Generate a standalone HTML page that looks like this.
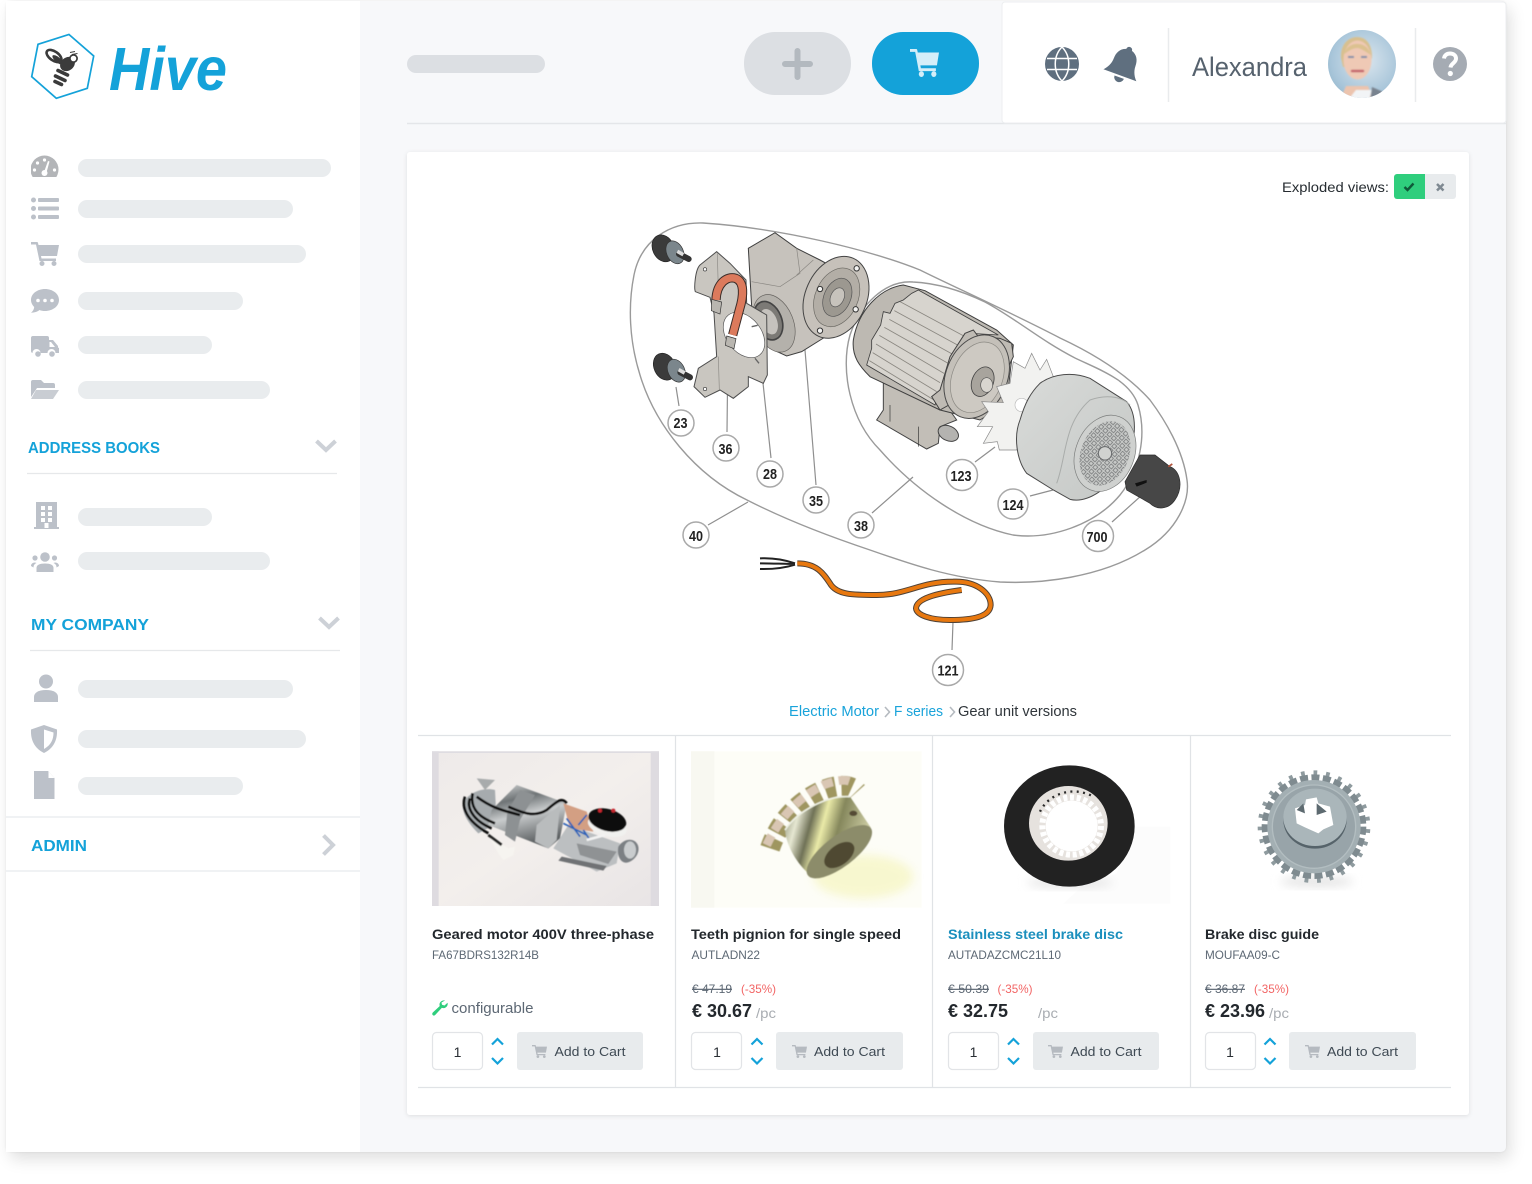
<!DOCTYPE html>
<html lang="en"><head><meta charset="utf-8"><title>Hive</title>
<style>
html,body{margin:0;padding:0;background:#fff;width:1532px;height:1184px;overflow:hidden}
#card{position:absolute;left:6px;top:1px;width:1500px;height:1151px;border-radius:5px;background:#f7f8fa;box-shadow:4px 7px 16px rgba(0,0,0,.13),0 0 2px rgba(0,0,0,.08)}
svg{position:absolute;left:0;top:0}
text{font-family:"Liberation Sans",sans-serif}
</style></head><body>
<div id="card"></div>
<svg width="1532" height="1184" viewBox="0 0 1532 1184" xmlns="http://www.w3.org/2000/svg">
<defs>
<filter id="b1" x="-10%" y="-10%" width="120%" height="120%"><feGaussianBlur stdDeviation="1.6"/></filter>
<filter id="b05" x="-10%" y="-10%" width="120%" height="120%"><feGaussianBlur stdDeviation=".7"/></filter>
<filter id="b2" x="-30%" y="-30%" width="160%" height="160%"><feGaussianBlur stdDeviation="14"/></filter>
<filter id="sh" x="-5%" y="-5%" width="110%" height="110%"><feDropShadow dx="0" dy="1" stdDeviation="2" flood-color="#000" flood-opacity=".1"/></filter>
<linearGradient id="cyl" x1="0" y1="0" x2="0.3" y2="1"><stop offset="0" stop-color="#d8dadb"/><stop offset=".3" stop-color="#6f7476"/><stop offset=".55" stop-color="#c9cccd"/><stop offset="1" stop-color="#5c6062"/></linearGradient>
<linearGradient id="hub" x1="0" y1="0" x2="1" y2="0.25"><stop offset="0" stop-color="#7f8468"/><stop offset=".2" stop-color="#e6e7d2"/><stop offset=".36" stop-color="#6f7156"/><stop offset=".5" stop-color="#eaeaa8"/><stop offset=".68" stop-color="#85875c"/><stop offset="1" stop-color="#c9c9a0"/></linearGradient>
<linearGradient id="img1bg" x1="0" y1="0" x2="1" y2="1"><stop offset="0" stop-color="#eeeae9"/><stop offset=".5" stop-color="#f3efec"/><stop offset="1" stop-color="#e8e4e5"/></linearGradient>
<linearGradient id="cover" x1="0" y1="0" x2="1" y2="1"><stop offset="0" stop-color="#d9dbd9"/><stop offset="1" stop-color="#c4c7c5"/></linearGradient>
<radialGradient id="av" cx=".55" cy=".45" r=".7"><stop offset="0" stop-color="#dbe6ee"/><stop offset=".7" stop-color="#a9c6da"/><stop offset="1" stop-color="#8fb4c9"/></radialGradient>
<pattern id="grille" width="17" height="17" patternUnits="userSpaceOnUse" patternTransform="rotate(20)"><rect width="17" height="17" fill="#c8cac8"/><rect x="1" y="1" width="11" height="11" fill="none" stroke="#77797a" stroke-width="2.4"/></pattern>
<clipPath id="avc"><circle cx="1362" cy="64" r="34"/></clipPath>
<clipPath id="gauge"><rect x="31" y="155" width="28" height="22"/></clipPath>
<symbol id="cart" viewBox="0 0 28 24" preserveAspectRatio="none"><path d="M0 0H6a1 1 0 0 1 1 1L7.500 3H28L26 14H10L10.500 16.500H25V19H8.500L5 2.500H0Z"/><circle cx="11" cy="21.500" r="2.500"/><circle cx="23" cy="21.500" r="2.500"/></symbol>
<g id="mount"><ellipse cx="130" cy="115" rx="32" ry="42" transform="rotate(-25 130 115)" fill="#3b3b3b" stroke="#222" stroke-width="2"/><ellipse cx="165" cy="127" rx="25" ry="36" transform="rotate(-25 165 127)" fill="#7b868c" stroke="#333" stroke-width="2"/><path d="M177 132L206 147" stroke="#333" stroke-width="18" stroke-linecap="round"/><path d="M172 124L190 134" stroke="#ddd" stroke-width="11"/></g>
</defs>

<!-- sidebar -->
<rect x="6" y="1" width="354" height="1151" fill="#fff"/>
<path d="M6 817H360M6 871H360" stroke="#eceef0" stroke-width="1.500"/>
<!-- logo -->
<path d="M69 34.500L93.700 56 87.300 88.300 56.300 98.300 31.700 76.700 38 44.300Z" fill="#fff" stroke="#14a2d9" stroke-width="1.700"/>
<g>
<ellipse cx="54" cy="56" rx="8.500" ry="4.500" transform="rotate(35 54 56)" fill="#fff" stroke="#3b3b3b" stroke-width="2.600"/>
<ellipse cx="58" cy="60" rx="7" ry="2.600" transform="rotate(40 58 60)" fill="#3b3b3b"/>
<ellipse cx="67.500" cy="64" rx="8" ry="6.500" transform="rotate(-40 67.500 64)" fill="#3b3b3b"/>
<circle cx="73.500" cy="58.500" r="3.600" fill="#fff" stroke="#3b3b3b" stroke-width="1.700"/>
<path d="M70 52.500l5-1M72 54.500l5.500-1" stroke="#3b3b3b" fill="none" stroke-width="1"/>
<path d="M58 70.500l9.500 4.500M55.500 76l9.500 4.500M55 81.500l6.500 3" stroke="#3b3b3b" fill="none" stroke-width="3.600" stroke-linecap="round"/>
</g>
<text x="109" y="90" font-size="61" font-weight="700" font-style="italic" fill="#14a2d9" textLength="118" lengthAdjust="spacingAndGlyphs">Hive</text>

<!-- sidebar icons -->
<g fill="#bcc1c9">
<circle cx="44.500" cy="169.500" r="14" fill="#b3b5b8" clip-path="url(#gauge)"/>
<g fill="#fff"><circle cx="44.500" cy="160" r="1.600"/><circle cx="37.500" cy="163" r="1.600"/><circle cx="34.500" cy="170" r="1.600"/><circle cx="54.500" cy="170" r="1.600"/><circle cx="44.500" cy="173" r="3"/><path d="M44 172l4-11 1.500.5-3 11z"/></g>
<circle cx="33.500" cy="200" r="2.500"/><circle cx="33.500" cy="208.500" r="2.500"/><circle cx="33.500" cy="217" r="2.500"/>
<rect x="38" y="198" width="21" height="4" rx="1"/><rect x="38" y="206.500" width="21" height="4" rx="1"/><rect x="38" y="215" width="21" height="4" rx="1"/>
<use href="#cart" x="31" y="242" width="28" height="24"/>
<path d="M45 289c7.700 0 14 4.700 14 11s-6.300 11-14 11c-2 0-4-.3-5.500-1-2 1.700-5 2.700-8.500 2.700 2-1.500 3-3.500 3.200-5.700C32.300 305 31 302.700 31 300c0-6.300 6.300-11 14-11z"/>
<g fill="#fff"><circle cx="38" cy="300.500" r="1.800"/><circle cx="45" cy="300.500" r="1.800"/><circle cx="52" cy="300.500" r="1.800"/></g>
<path d="M33 336h14a2 2 0 0 1 2 2v2h4l5 6v1.500l1 .5v5h-3.500a4 4 0 0 0-8 0h-7a4 4 0 0 0-8 0H33a2 2 0 0 1-2-2v-13a2 2 0 0 1 2-2z"/>
<circle cx="38" cy="354" r="2.800"/><circle cx="52" cy="354" r="2.800"/>
<path d="M49.500 342v5h5.500l-4-5z" fill="#fff"/>
<path d="M31 382a2 2 0 0 1 2-2h8l3 3h9a2 2 0 0 1 2 2v3H37l-6 9z"/>
<path d="M36 390h23l-6 9H31z" fill="#c9cdd3"/>
<!-- building -->
<path d="M36 502h21v25h2v2H34v-2h2z"/>
<g fill="#fff"><rect x="41" y="506" width="4" height="4"/><rect x="48" y="506" width="4" height="4"/><rect x="41" y="512" width="4" height="4"/><rect x="48" y="512" width="4" height="4"/><rect x="41" y="518" width="4" height="4"/><rect x="48" y="518" width="4" height="4"/><rect x="44.500" y="523" width="4" height="5"/></g>
<!-- group -->
<circle cx="45" cy="557" r="4.800"/><circle cx="35" cy="558" r="2.600"/><circle cx="54.500" cy="558" r="2.600"/>
<path d="M36.500 572v-4c0-3 3-4.500 8.500-4.500s8.500 1.500 8.500 4.500v4z"/>
<path d="M31 566c0-2 1.500-3.500 4-3.500l1.500.5c-2 1-3 2-3 4.500zM59 566c0-2-1.500-3.500-4-3.500l-1.500.5c2 1 3 2 3 4.500z"/>
<!-- user -->
<circle cx="46" cy="681.500" r="7"/>
<path d="M34 702v-5c0-4 4-7 12-7s12 3 12 7v5z"/>
<!-- shield -->
<path d="M44 725l13 4.500c.5 10-3 18.500-13 23.500-10-5-13.500-13.500-13-23.500z"/>
<path d="M44 729.500l9.500 3c0 7-2.500 12.500-9.500 16.500z" fill="#fff"/>
<!-- file -->
<path d="M34 771h14l6.500 7v21H34z"/>
<path d="M48.500 771.500l6 6.500h-6z" fill="#fff"/>
</g>
<!-- skeleton bars -->
<g fill="#e9ecee">
<rect x="78" y="159" width="253" height="18" rx="9"/>
<rect x="78" y="200" width="215" height="18" rx="9"/>
<rect x="78" y="245" width="228" height="18" rx="9"/>
<rect x="78" y="292" width="165" height="18" rx="9"/>
<rect x="78" y="336" width="134" height="18" rx="9"/>
<rect x="78" y="381" width="192" height="18" rx="9"/>
<rect x="78" y="508" width="134" height="18" rx="9"/>
<rect x="78" y="552" width="192" height="18" rx="9"/>
<rect x="78" y="680" width="215" height="18" rx="9"/>
<rect x="78" y="730" width="228" height="18" rx="9"/>
<rect x="78" y="777" width="165" height="18" rx="9"/>
</g>
<g font-size="16" font-weight="700" fill="#14a2d9">
<text x="28" y="453" textLength="132" lengthAdjust="spacingAndGlyphs">ADDRESS BOOKS</text>
<text x="31" y="630" textLength="118" lengthAdjust="spacingAndGlyphs">MY COMPANY</text>
<text x="31" y="851" textLength="56" lengthAdjust="spacingAndGlyphs">ADMIN</text>
</g>
<path d="M27 473.500H337M30 650.500H340" stroke="#e6e8ea" stroke-width="1.200"/>
<g fill="none" stroke="#cdd1d7" stroke-width="4">
<path d="M316.500 441l9.500 9 9.500-9M319.500 618l9.500 9 9.500-9M323.500 835.500l9.500 9.500-9.500 9.500"/>
</g>

<!-- header -->
<rect x="407" y="55" width="138" height="18" rx="9" fill="#dcdfe3"/>
<rect x="744" y="32" width="107" height="63" rx="31" fill="#dcdfe3"/>
<path d="M797.500 51v26M785 64h25" stroke="#b3b9bf" stroke-width="6" stroke-linecap="round"/>
<rect x="872" y="32" width="107" height="63" rx="31" fill="#14a2d9"/>
<use href="#cart" x="910" y="49" width="29" height="28" fill="#d4eef9"/>
<path d="M407 123.500H1506" stroke="#e4e6e9" stroke-width="1.500"/>
<rect x="1002" y="2" width="504" height="121" rx="3" fill="#fff" stroke="#eceef0"/>
<g fill="none" stroke="#5f6f7f">
<circle cx="1062" cy="64" r="16" stroke-width="2" fill="#5f6f7f"/>
<path d="M1047 58.500H1077M1047 69.500H1077M1062 47c-9 9-9 25 0 34M1062 47c9 9 9 25 0 34" stroke="#fff" stroke-width="1.500"/>
</g>
<g transform="rotate(20 1124 64)" fill="#5f6f7f"><path d="M1124 46c-2 0-3 1.500-3 3-6 2-8.500 7-8.500 13 0 6-3 11-6 14h35c-3-3-6-8-6-14 0-6-2.500-11-8.500-13 0-1.500-1-3-3-3z"/><path d="M1119 78a5 5 0 0 0 10 0z"/></g>
<path d="M1168.500 28V102M1415.500 28V102" stroke="#e9ebed" stroke-width="1.500"/>
<text x="1192" y="76" font-size="27" fill="#56626e" textLength="115" lengthAdjust="spacingAndGlyphs">Alexandra</text>
<g clip-path="url(#avc)">
<rect x="1328" y="30" width="68" height="68" fill="url(#av)"/>
<g filter="url(#b05)">
<path d="M1341 58c-1-13 7-21 16-21s15 7 15 20l-2 10h-27z" fill="#d8c08f"/>
<path d="M1346 86h22l6 14h-34z" fill="#ecc4ae"/>
<ellipse cx="1357.500" cy="60" rx="14" ry="19.500" fill="#efc9b5"/>
<path d="M1343 55c3-7 8-12 15-11 6 0 11 4 13 11-5-3-9-6-13-7-5 0-10 3-15 7z" fill="#dcc190"/>
<path d="M1348 57h6M1361 57h6" stroke="#7c8ca8" stroke-width="2"/>
<path d="M1352 71h11" stroke="#c4606a" stroke-width="2.500" stroke-linecap="round"/>
<path d="M1348 100l8-10h16l-3 10z" fill="#f2f4f6"/>
<path d="M1370 100l2-13 16 7 4 6z" fill="#79838f"/>
</g>
</g>
<circle cx="1450" cy="64" r="17" fill="#a5abb3"/>
<path d="M1444 58.500c.5-3.500 3-5 6-5 3.500 0 6 2 6 5 0 4.500-5 4.500-5.500 9" fill="none" stroke="#fff" stroke-width="4"/>
<circle cx="1450.300" cy="73.500" r="2.600" fill="#fff"/>

<!-- main panel -->
<rect x="407" y="152" width="1062" height="963" rx="3" fill="#fff" filter="url(#sh)"/>
<text x="1282" y="192" font-size="14" fill="#262c31" textLength="107" lengthAdjust="spacingAndGlyphs">Exploded views:</text>
<path d="M1397 174h28v25h-28a3 3 0 0 1-3-3v-19a3 3 0 0 1 3-3z" fill="#2fce7d"/>
<path d="M1425 174h28a3 3 0 0 1 3 3v19a3 3 0 0 1-3 3h-28z" fill="#e8ebed"/>
<path d="M1404.500 187l3 3 6-6.500" fill="none" stroke="#0f5a39" stroke-width="2.400"/>
<path d="M1437 184l6.500 6.500M1443.500 184l-6.500 6.500" stroke="#7f8992" stroke-width="2.500"/>

<!-- outlines -->
<g fill="none" stroke="#9a9a9a" stroke-width="1.400">
<path d="M703 223C670 222 641 240 634 275 628 305 629 340 640 375 655 425 695 475 747 500 790 522 840 540 870 550 910 564 950 578 1000 582 1040 584 1100 578 1145 550 1178 530 1190 500 1187 480 1183 450 1165 420 1150 400 1125 372 1090 352 1060 338 1010 312 950 285 920 270 870 250 780 228 703 223Z"/>
<path d="M913 282C885 280 860 305 850 335 840 370 850 420 880 450 915 490 965 525 1013 535 1050 540 1095 525 1120 495 1140 470 1147 435 1138 405 1130 380 1100 370 1075 358 1040 340 1015 318 985 302 960 290 935 283 913 282Z"/>
</g>
<!-- leader lines -->
<path d="M676 387L679 406M728 343L727 432M763 383L771 458M805 350L816 485M913 477L872 513M748 502L708 525M995 447L975 462M1053 490L1030 496M1142 495L1112 522M953 622L952 650" stroke="#8f8f8f" stroke-width="1.200" fill="none"/>

<!-- left assembly -->
<g transform="translate(620 210) scale(.33333)">
<use href="#mount"/>
<use href="#mount" transform="translate(4 355)"/>
<path d="M385 115L465 68 530 115 600 150 655 180 625 375 545 425 500 438 450 415 395 290Z" fill="#c6c2bc" stroke="#3f3f3f" stroke-width="3"/>
<path d="M530 115L540 190 480 230 395 215" fill="none" stroke="#8a8782" stroke-width="2"/>
<path d="M530 195l50-45" stroke="#8a8782" stroke-width="2"/>
<ellipse cx="462" cy="340" rx="58" ry="90" transform="rotate(-22 462 340)" fill="#b4b1ab" stroke="#66635f" stroke-width="2"/>
<ellipse cx="445" cy="332" rx="40" ry="60" transform="rotate(-22 445 332)" fill="#7c7a76" stroke="#444" stroke-width="5"/>
<ellipse cx="447" cy="335" rx="24" ry="40" transform="rotate(-22 447 335)" fill="#c5c2bd"/>
<ellipse cx="648" cy="262" rx="92" ry="128" transform="rotate(24 648 262)" fill="#c6c1ba" stroke="#444" stroke-width="3"/>
<ellipse cx="650" cy="262" rx="64" ry="92" transform="rotate(24 650 262)" fill="#b3aea6" stroke="#6a6862" stroke-width="2"/>
<ellipse cx="652" cy="262" rx="40" ry="60" transform="rotate(24 652 262)" fill="#9c9890" stroke="#555" stroke-width="2"/>
<ellipse cx="652" cy="262" rx="20" ry="30" transform="rotate(24 652 262)" fill="#c7c3bc" stroke="#555" stroke-width="2"/>
<g fill="#f4f4f2" stroke="#333" stroke-width="3"><circle cx="710" cy="175" r="8"/><circle cx="600" cy="237" r="8"/><circle cx="707" cy="298" r="8"/><circle cx="600" cy="362" r="8"/></g>
<path d="M290 125L240 165C225 180 222 235 226 245L270 262 282 310 290 440 235 475 222 530 255 562 300 540 340 565 385 530 385 500 430 520 442 495 440 315 380 280 378 210 330 160Z" fill="#c9c6c0" stroke="#4d4d4d" stroke-width="3"/>
<path d="M292 130L295 240M295 440L298 540" stroke="#8d8b86" stroke-width="2"/>
<ellipse cx="372" cy="375" rx="52" ry="76" transform="rotate(-38 372 375)" fill="#fff" stroke="#555" stroke-width="2"/>
<circle cx="255" cy="178" r="5" fill="#fff" stroke="#333" stroke-width="2"/>
<circle cx="255" cy="537" r="5" fill="#fff" stroke="#333" stroke-width="2"/>
<path d="M405 445l12 15M395 350l18-4" stroke="#666" stroke-width="4"/>
<path d="M288 270C290 220 320 197 347 205 373 215 372 255 358 300L338 375" fill="none" stroke="#3a2c28" stroke-width="28"/>
<path d="M288 270C290 220 320 197 347 205 373 215 372 255 358 300L338 375" fill="none" stroke="#dc7a5c" stroke-width="22"/>
<path d="M275 268l30 8-5 36-26-10zM320 378l28 8-6 30-26-10z" fill="#b9b6b0" stroke="#333" stroke-width="2"/>
</g>

<!-- motor -->
<g transform="translate(840 270) scale(.33333)">
<path d="M130 330L130 420 110 450 260 537 295 520 300 470 350 450 300 380Z" fill="#c2beb7" stroke="#444" stroke-width="3"/>
<path d="M150 405V455M235 470V530" stroke="#333" stroke-width="2"/>
<ellipse cx="325" cy="490" rx="32" ry="22" transform="rotate(25 325 490)" fill="#b4b3b0" stroke="#444" stroke-width="3"/>
<path d="M40 210C55 120 120 55 190 45L255 62 470 180 520 225 500 400 420 450 300 420 90 320C60 290 35 260 40 210Z" fill="#bdb9b2" stroke="#3f3f3f" stroke-width="3"/>
<path d="M130 125L122 165 95 210 95 235 80 285 285 405 300 360 330 290 360 215 390 190 475 195 235 60 215 70 190 90 165 100 150 130Z" fill="#d7d4ce" stroke="#3f3f3f" stroke-width="2.500"/>
<g stroke="#8a8780" stroke-width="2.500" fill="none">
<path d="M180 95L375 200M163 122L358 228M148 148L342 255M133 172L328 282M118 196L312 310M108 222L300 338M98 248L290 365M88 272L285 392"/>
</g>
<path d="M375 190L400 180 415 200 480 205 515 220 520 260 495 310 300 420 275 380 300 360 330 260Z" fill="#bfbbb4" stroke="#3f3f3f" stroke-width="3"/>
<ellipse cx="410" cy="320" rx="92" ry="130" transform="rotate(22 410 320)" fill="#c4c0b9" stroke="#4a4a4a" stroke-width="3"/>
<ellipse cx="412" cy="322" rx="75" ry="110" transform="rotate(22 412 322)" fill="#cdc9c2" stroke="#8b8983" stroke-width="2"/>
<ellipse cx="428" cy="335" rx="32" ry="46" transform="rotate(22 428 335)" fill="#a8a49d" stroke="#444" stroke-width="2.500"/>
<ellipse cx="440" cy="345" rx="18" ry="22" fill="#d9d6d0" stroke="#555" stroke-width="2"/>
<path d="M520 275L555 295 575 250 600 300 620 268 642 325 600 400 530 540 478 540 472 515 430 520 458 470 412 470 445 425 425 395 490 398 470 350 510 340Z" fill="#f2f2f0" stroke="#888" stroke-width="2"/>
<circle cx="545" cy="405" r="20" fill="#fff" stroke="#bbb" stroke-width="2"/>
<path d="M600 340C640 310 700 305 750 325L860 395C890 430 892 500 860 570 810 660 740 700 690 688L640 660 560 610C530 570 520 500 540 450 555 400 570 370 600 340Z" fill="url(#cover)" stroke="#4a4a4a" stroke-width="3"/>
<path d="M650 640C680 560 670 460 750 390 790 375 840 375 870 405" fill="none" stroke="#a9acaa" stroke-width="3"/>
<ellipse cx="795" cy="550" rx="88" ry="118" transform="rotate(22 795 550)" fill="#cfd1cf" stroke="#7a7c7b" stroke-width="2"/>
<ellipse cx="795" cy="550" rx="72" ry="100" transform="rotate(22 795 550)" fill="url(#grille)"/>
<circle cx="795" cy="550" r="20" fill="#d0d2d0" stroke="#66686a" stroke-width="3"/>
<path d="M900 555L945 555 990 590C1020 600 1032 650 1005 690 985 720 950 720 930 700L860 660 855 635Z" fill="#474747" stroke="#2c2c2c" stroke-width="2"/>
<path d="M885 640l35-10v8l-30 12z" fill="#111"/>
<path d="M985 590l12-8" stroke="#b3533b" stroke-width="5"/>
</g>

<!-- cable -->
<g transform="translate(720 540) scale(.33333)" fill="none">
<path d="M120 55C160 53 190 58 225 70M120 70C160 70 190 72 225 72M120 87C160 88 190 85 225 74" stroke="#222" stroke-width="6"/>
<path d="M232 70C290 70 310 100 330 130 350 165 400 165 470 165 560 165 600 125 700 125 770 122 812 160 812 195 810 230 760 240 690 240 630 240 590 225 588 205 590 175 650 160 725 150" stroke="#4f4237" stroke-width="18"/>
<path d="M232 70C290 70 310 100 330 130 350 165 400 165 470 165 560 165 600 125 700 125 770 122 812 160 812 195 810 230 760 240 690 240 630 240 590 225 588 205 590 175 650 160 725 150" stroke="#e8780f" stroke-width="12"/>
</g>

<!-- callouts -->
<g fill="#fff" stroke="#a9a9a9" stroke-width="1.500">
<circle cx="681" cy="423" r="13"/><circle cx="726" cy="448" r="13"/><circle cx="770" cy="474" r="13"/><circle cx="816" cy="500" r="13"/><circle cx="861" cy="525" r="13"/><circle cx="696" cy="535" r="13"/><circle cx="962" cy="475" r="15.500"/><circle cx="1013" cy="504" r="15"/><circle cx="1098" cy="536" r="15.500"/><circle cx="948" cy="670" r="15.500"/>
</g>
<g font-size="14.500" font-weight="700" fill="#222" text-anchor="middle">
<text x="680.500" y="428" textLength="14" lengthAdjust="spacingAndGlyphs">23</text>
<text x="725.500" y="454" textLength="14" lengthAdjust="spacingAndGlyphs">36</text>
<text x="770" y="479" textLength="14" lengthAdjust="spacingAndGlyphs">28</text>
<text x="816" y="506" textLength="14" lengthAdjust="spacingAndGlyphs">35</text>
<text x="861" y="531" textLength="14" lengthAdjust="spacingAndGlyphs">38</text>
<text x="696" y="541" textLength="14" lengthAdjust="spacingAndGlyphs">40</text>
<text x="961" y="481" textLength="21" lengthAdjust="spacingAndGlyphs">123</text>
<text x="1013" y="510" textLength="21" lengthAdjust="spacingAndGlyphs">124</text>
<text x="1097" y="542" textLength="21" lengthAdjust="spacingAndGlyphs">700</text>
<text x="948" y="675.500" textLength="21" lengthAdjust="spacingAndGlyphs">121</text>
</g>

<!-- breadcrumb -->
<g font-size="14.500">
<text x="789" y="716" fill="#19a3da" textLength="90" lengthAdjust="spacingAndGlyphs">Electric Motor</text>
<text x="894" y="716" fill="#19a3da" textLength="49" lengthAdjust="spacingAndGlyphs">F series</text>
<text x="958" y="716" fill="#30363b" textLength="119" lengthAdjust="spacingAndGlyphs">Gear unit versions</text>
</g>
<path d="M885 707l4.500 5-4.500 5M950 707l4.500 5-4.500 5" fill="none" stroke="#b5bac0" stroke-width="1.600"/>

<!-- table lines -->
<path d="M418 735.500H1451M418 1087.500H1451M675.500 735V1087M932.500 735V1087M1190.500 735V1087" stroke="#e0e3e6" stroke-width="1.200" fill="none"/>

<!-- product image 1 -->
<g transform="translate(420 740) scale(.33333)">
<rect x="36" y="34" width="681" height="464" fill="url(#img1bg)"/>
<rect x="36" y="34" width="20" height="464" fill="#dedbe0"/>
<rect x="692" y="34" width="25" height="464" fill="#dedbe0"/>
<rect x="36" y="34" width="681" height="5" fill="#dedce1"/>
<g filter="url(#b1)">
<path d="M130 190C140 160 190 140 225 150L230 250 175 280C145 250 125 220 130 190Z" fill="#a6abae"/>
<path d="M215 210L290 135 440 190 420 295 385 325 205 255Z" fill="url(#cyl)"/>
<path d="M262 215L300 150 345 165 300 240 285 305 255 285Z" fill="#8d9193"/>
<path d="M350 255L420 195 410 300 385 325 345 305Z" fill="#b9bcbd"/>
<path d="M400 325L445 255 600 310 590 370 530 395Z" fill="#bcbfc1"/>
<path d="M470 310L590 335 565 372 480 345Z" fill="#8f9294"/>
<path d="M425 350L560 378 550 392 415 362Z" fill="#6f7274"/>
<path d="M430 190L500 215 520 275 450 265Z" fill="#d39f83"/>
<ellipse cx="562" cy="258" rx="60" ry="30" transform="rotate(15 562 258)" fill="#f1f1ef"/>
<ellipse cx="562" cy="240" rx="58" ry="33" transform="rotate(15 562 240)" fill="#101010"/>
<circle cx="540" cy="212" r="6" fill="#c6252e"/><circle cx="580" cy="212" r="6" fill="#c6252e"/>
<path d="M595 320C615 290 650 295 655 320 660 345 635 370 615 368 600 365 590 345 595 320Z" fill="#7b8084"/>
<ellipse cx="630" cy="330" rx="18" ry="26" fill="#c9ccce"/>
<path d="M135 170C125 200 135 240 205 280M150 175C140 200 155 240 215 265M158 160C150 200 170 230 225 250M265 200C300 215 340 235 380 210 410 185 425 170 440 190M170 170C210 200 240 210 300 225" fill="none" stroke="#0a0a0a" stroke-width="8"/>
<path d="M430 250L500 285M440 235L480 290M475 255L500 225M490 270L510 300" fill="none" stroke="#2a63b8" stroke-width="5"/>
<path d="M500 300L555 285" stroke="#f2f2f2" stroke-width="8"/>
<path d="M170 115L225 120 195 150Z" fill="#a8abac"/>
<path d="M205 285L265 325 285 320 280 345 250 360 235 340Z" fill="#f6f4f0"/>
<path d="M205 285L245 315" stroke="#222" stroke-width="8"/>
</g>
</g>

<!-- product image 2 -->
<g transform="translate(420 740) scale(.33333)">
<rect x="813" y="34" width="692" height="469" fill="#fdfdf7"/>
<rect x="813" y="34" width="70" height="469" fill="#f8f8f1"/>
<ellipse cx="1330" cy="410" rx="150" ry="65" fill="#f3f2a8" opacity=".5" filter="url(#b2)"/>
<g filter="url(#b1)">
<path d="M1050 325C1075 250 1130 185 1210 150 1250 135 1290 130 1312 155" fill="none" stroke="#9f9660" stroke-width="60" stroke-dasharray="32 18"/>
<path d="M1040 315C1075 240 1130 175 1210 135 1250 120 1280 115 1300 130" fill="none" stroke="#d9c6b3" stroke-width="26" stroke-dasharray="32 18"/>
<path d="M1095 270C1130 215 1220 165 1290 170L1352 262C1345 320 1250 400 1170 405 1130 370 1100 320 1095 270Z" fill="url(#hub)"/>
<path d="M1095 270C1130 215 1220 165 1290 170" fill="none" stroke="#eef0e2" stroke-width="5"/>
<ellipse cx="1258" cy="335" rx="118" ry="46" transform="rotate(-37 1258 335)" fill="#8c8c6a"/>
<ellipse cx="1258" cy="345" rx="52" ry="30" transform="rotate(-37 1258 345)" fill="#4f4930"/>
<ellipse cx="1300" cy="220" rx="12" ry="8" fill="#554c35"/>
</g>
</g>

<!-- product image 3 -->
<g transform="translate(930 740) scale(.33333)">
<path d="M560 400L610 260 721 260V491H400L450 445Z" fill="#fcfcfc"/>
<ellipse cx="420" cy="428" rx="130" ry="16" fill="#e6e6e6" filter="url(#b2)"/>
<g filter="url(#b05)">
<ellipse cx="418" cy="258" rx="196" ry="182" fill="#202022"/>
<ellipse cx="415" cy="250" rx="118" ry="112" fill="#e6e2de"/>
<ellipse cx="425" cy="258" rx="78" ry="76" fill="#fff"/>
<ellipse cx="425" cy="258" rx="88" ry="86" pathLength="270" fill="none" stroke="#fff" stroke-width="18" stroke-dasharray="6 4"/>
<path d="M330 215A110 100 0 0 1 490 170" fill="none" stroke="#2c2c2c" stroke-width="7" stroke-dasharray="6 13"/>
</g>
</g>

<!-- product image 4 -->
<g transform="translate(930 740) scale(.33333)">
<ellipse cx="1160" cy="425" rx="110" ry="16" fill="#e4e4e4" filter="url(#b2)"/>
<g filter="url(#b05)">
<circle cx="1152" cy="260" r="162" pathLength="270" fill="none" stroke="#8f9b9f" stroke-width="14" stroke-dasharray="3 7" stroke-dashoffset="-2"/>
<circle cx="1152" cy="260" r="148" pathLength="270" fill="none" stroke="#7f8b90" stroke-width="18" stroke-dasharray="7 3"/>
<circle cx="1152" cy="260" r="140" fill="#a3afb3"/>
<circle cx="1152" cy="260" r="125" fill="#98a4a9" stroke="#b2bdc0" stroke-width="4"/>
<ellipse cx="1155" cy="240" rx="95" ry="86" fill="#56636a"/>
<ellipse cx="1155" cy="232" rx="95" ry="86" fill="#aab6ba"/>
<path d="M1128 178L1160 172 1165 190 1200 200 1210 255 1180 268 1165 280 1125 262 1100 250 1095 205 1125 195Z" fill="#fff"/>
<path d="M1100 210l20-20 5 30zM1160 190l30 25-30 10z" fill="#5d6a70"/>
</g>
</g>

<!-- product text -->
<g font-size="14" font-weight="700" fill="#23282d">
<text x="432" y="939" textLength="222" lengthAdjust="spacingAndGlyphs">Geared motor 400V three-phase</text>
<text x="691" y="939" textLength="210" lengthAdjust="spacingAndGlyphs">Teeth pignion for single speed</text>
<text x="948" y="939" fill="#1b8fbd" textLength="175" lengthAdjust="spacingAndGlyphs">Stainless steel brake disc</text>
<text x="1205" y="939" textLength="114" lengthAdjust="spacingAndGlyphs">Brake disc guide</text>
</g>
<g font-size="12" fill="#5d6874">
<text x="432" y="959" textLength="107" lengthAdjust="spacingAndGlyphs">FA67BDRS132R14B</text>
<text x="691.500" y="959" textLength="68.500" lengthAdjust="spacingAndGlyphs">AUTLADN22</text>
<text x="948" y="959" textLength="113" lengthAdjust="spacingAndGlyphs">AUTADAZCMC21L10</text>
<text x="1205" y="959" textLength="75" lengthAdjust="spacingAndGlyphs">MOUFAA09-C</text>
<g text-decoration="line-through">
<text x="692" y="993" textLength="40" lengthAdjust="spacingAndGlyphs">€ 47.19</text>
<text x="948" y="993" textLength="41" lengthAdjust="spacingAndGlyphs">€ 50.39</text>
<text x="1205" y="993" textLength="40" lengthAdjust="spacingAndGlyphs">€ 36.87</text>
</g>
</g>
<g font-size="12" fill="#f26464">
<text x="741" y="993" textLength="35" lengthAdjust="spacingAndGlyphs">(-35%)</text>
<text x="997.500" y="993" textLength="35" lengthAdjust="spacingAndGlyphs">(-35%)</text>
<text x="1254" y="993" textLength="35" lengthAdjust="spacingAndGlyphs">(-35%)</text>
</g>
<g font-size="18" font-weight="700" fill="#23282d">
<text x="692" y="1017" textLength="60" lengthAdjust="spacingAndGlyphs">€ 30.67</text>
<text x="948" y="1017" textLength="60" lengthAdjust="spacingAndGlyphs">€ 32.75</text>
<text x="1205" y="1017" textLength="60" lengthAdjust="spacingAndGlyphs">€ 23.96</text>
</g>
<g font-size="14" fill="#a9adb2">
<text x="756" y="1018" textLength="20" lengthAdjust="spacingAndGlyphs">/pc</text>
<text x="1038" y="1018" textLength="20" lengthAdjust="spacingAndGlyphs">/pc</text>
<text x="1269" y="1018" textLength="20" lengthAdjust="spacingAndGlyphs">/pc</text>
</g>
<path d="M445 1000.500c-2.500-.5-5 1-5.500 3.500 0 .8 0 1.500.3 2l-7 6.500c-.9 1-.6 2 0 2.600.7.600 1.700.7 2.500-.2l6.500-7c2.500.8 5.200-.5 5.800-3.200.2-.8.100-1.500-.1-2l-3 2.800-2.500-.7-.5-2.300z" fill="#2fce7d"/>
<text x="451.500" y="1013" font-size="14.500" fill="#5d6874" textLength="82" lengthAdjust="spacingAndGlyphs">configurable</text>

<!-- controls -->
<g fill="#fff" stroke="#e2e4e7" stroke-width="1.200">
<rect x="432.500" y="1032.500" width="50" height="37" rx="4"/>
<rect x="691.500" y="1032.500" width="50" height="37" rx="4"/>
<rect x="948.500" y="1032.500" width="50" height="37" rx="4"/>
<rect x="1205.500" y="1032.500" width="50" height="37" rx="4"/>
</g>
<g font-size="14" fill="#2a2f34" text-anchor="middle">
<text x="457.500" y="1057">1</text><text x="717" y="1057">1</text><text x="973.500" y="1057">1</text><text x="1230" y="1057">1</text>
</g>
<g fill="none" stroke="#14a2d9" stroke-width="2.200">
<path d="M492 1044.500l5.500-5.500 5.500 5.500M492 1058l5.500 5.500 5.500-5.500"/>
<path d="M751.500 1044.500l5.500-5.500 5.500 5.500M751.500 1058l5.500 5.500 5.500-5.500"/>
<path d="M1008 1044.500l5.500-5.500 5.500 5.500M1008 1058l5.500 5.500 5.500-5.500"/>
<path d="M1264.500 1044.500l5.500-5.500 5.500 5.500M1264.500 1058l5.500 5.500 5.500-5.500"/>
</g>
<g fill="#e8ebed">
<rect x="517" y="1032" width="126" height="38" rx="3"/>
<rect x="776" y="1032" width="127" height="38" rx="3"/>
<rect x="1033" y="1032" width="126" height="38" rx="3"/>
<rect x="1289" y="1032" width="127" height="38" rx="3"/>
</g>
<g fill="#b5bac0">
<use href="#cart" x="532" y="1045" width="15" height="13"/>
<use href="#cart" x="792" y="1045" width="15" height="13"/>
<use href="#cart" x="1048" y="1045" width="15" height="13"/>
<use href="#cart" x="1305" y="1045" width="15" height="13"/>
</g>
<g font-size="13" fill="#3f4a54">
<text x="554.500" y="1056" textLength="71" lengthAdjust="spacingAndGlyphs">Add to Cart</text>
<text x="814" y="1056" textLength="71" lengthAdjust="spacingAndGlyphs">Add to Cart</text>
<text x="1070.500" y="1056" textLength="71" lengthAdjust="spacingAndGlyphs">Add to Cart</text>
<text x="1327" y="1056" textLength="71" lengthAdjust="spacingAndGlyphs">Add to Cart</text>
</g>
</svg>
</body></html>
